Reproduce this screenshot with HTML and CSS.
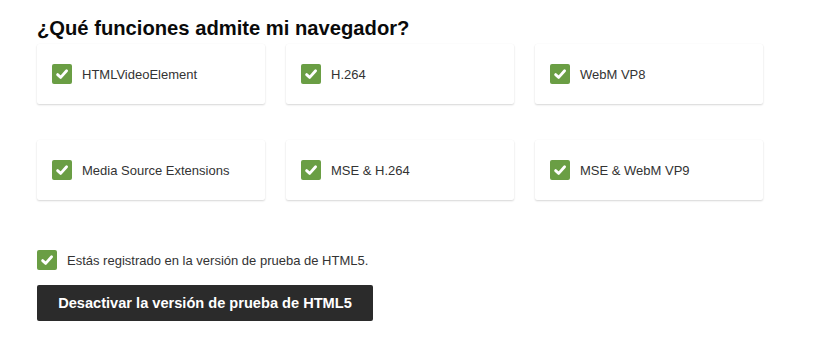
FILE: index.html
```html
<!DOCTYPE html>
<html lang="es">
<head>
<meta charset="utf-8">
<title>HTML5</title>
<link rel="stylesheet" href="styles.css">
</head>
<body>
<main class="page">
  <h2 class="title">¿Qué funciones admite mi navegador?</h2>
  <div class="grid">
    <div class="card"><span class="check"><svg viewBox="0 0 20 20"><path d="M5.6 10.6 L8.7 13.4 L14.6 6.8" /></svg></span><span class="label">HTMLVideoElement</span></div>
    <div class="card"><span class="check"><svg viewBox="0 0 20 20"><path d="M5.6 10.6 L8.7 13.4 L14.6 6.8" /></svg></span><span class="label">H.264</span></div>
    <div class="card"><span class="check"><svg viewBox="0 0 20 20"><path d="M5.6 10.6 L8.7 13.4 L14.6 6.8" /></svg></span><span class="label">WebM VP8</span></div>
    <div class="card"><span class="check"><svg viewBox="0 0 20 20"><path d="M5.6 10.6 L8.7 13.4 L14.6 6.8" /></svg></span><span class="label">Media Source Extensions</span></div>
    <div class="card"><span class="check"><svg viewBox="0 0 20 20"><path d="M5.6 10.6 L8.7 13.4 L14.6 6.8" /></svg></span><span class="label">MSE &amp; H.264</span></div>
    <div class="card"><span class="check"><svg viewBox="0 0 20 20"><path d="M5.6 10.6 L8.7 13.4 L14.6 6.8" /></svg></span><span class="label">MSE &amp; WebM VP9</span></div>
  </div>
  <div class="status"><span class="check"><svg viewBox="0 0 20 20"><path d="M5.6 10.6 L8.7 13.4 L14.6 6.8" /></svg></span><span class="label">Estás registrado en la versión de prueba de HTML5.</span></div>
  <button class="btn" type="button">Desactivar la versión de prueba de HTML5</button>
</main>
</body>
</html>
```
FILE: styles.css
```css
html, body {
  margin: 0;
  padding: 0;
  background: #fff;
}
body {
  font-family: "Liberation Sans", Arial, sans-serif;
  color: #333;
}
.page {
  padding: 14px 0 0 37px;
}
.title {
  margin: 0;
  font-size: 20.2px;
  line-height: 28px;
  font-weight: bold;
  color: #0a0a0a;
}
.grid {
  margin-top: 2px;
  display: grid;
  grid-template-columns: repeat(3, 228px);
  column-gap: 21px;
  row-gap: 36px;
}
.card {
  height: 60px;
  box-sizing: border-box;
  padding: 0 15px;
  display: flex;
  align-items: center;
  gap: 10px;
  background: #fff;
  border-radius: 2px;
  box-shadow: 0 1px 2px rgba(0, 0, 0, 0.16), 0 0 1px rgba(0, 0, 0, 0.04);
}
.check {
  width: 20px;
  height: 20px;
  flex: none;
  border-radius: 2px;
  background: #6a9e44;
  display: flex;
}
.check svg {
  width: 20px;
  height: 20px;
}
.check path {
  fill: none;
  stroke: #fff;
  stroke-width: 2.8;
  stroke-linecap: round;
  stroke-linejoin: round;
}
.label {
  font-size: 13px;
  color: #333;
}
.status {
  margin-top: 50px;
  display: flex;
  align-items: center;
  gap: 10px;
}
.btn {
  margin-top: 15px;
  display: block;
  width: 336px;
  height: 36px;
  padding: 0;
  border: none;
  border-radius: 2px;
  background: #2b2b2b;
  color: #fff;
  font-family: "Liberation Sans", Arial, sans-serif;
  font-weight: bold;
  font-size: 14.6px;
}
```
